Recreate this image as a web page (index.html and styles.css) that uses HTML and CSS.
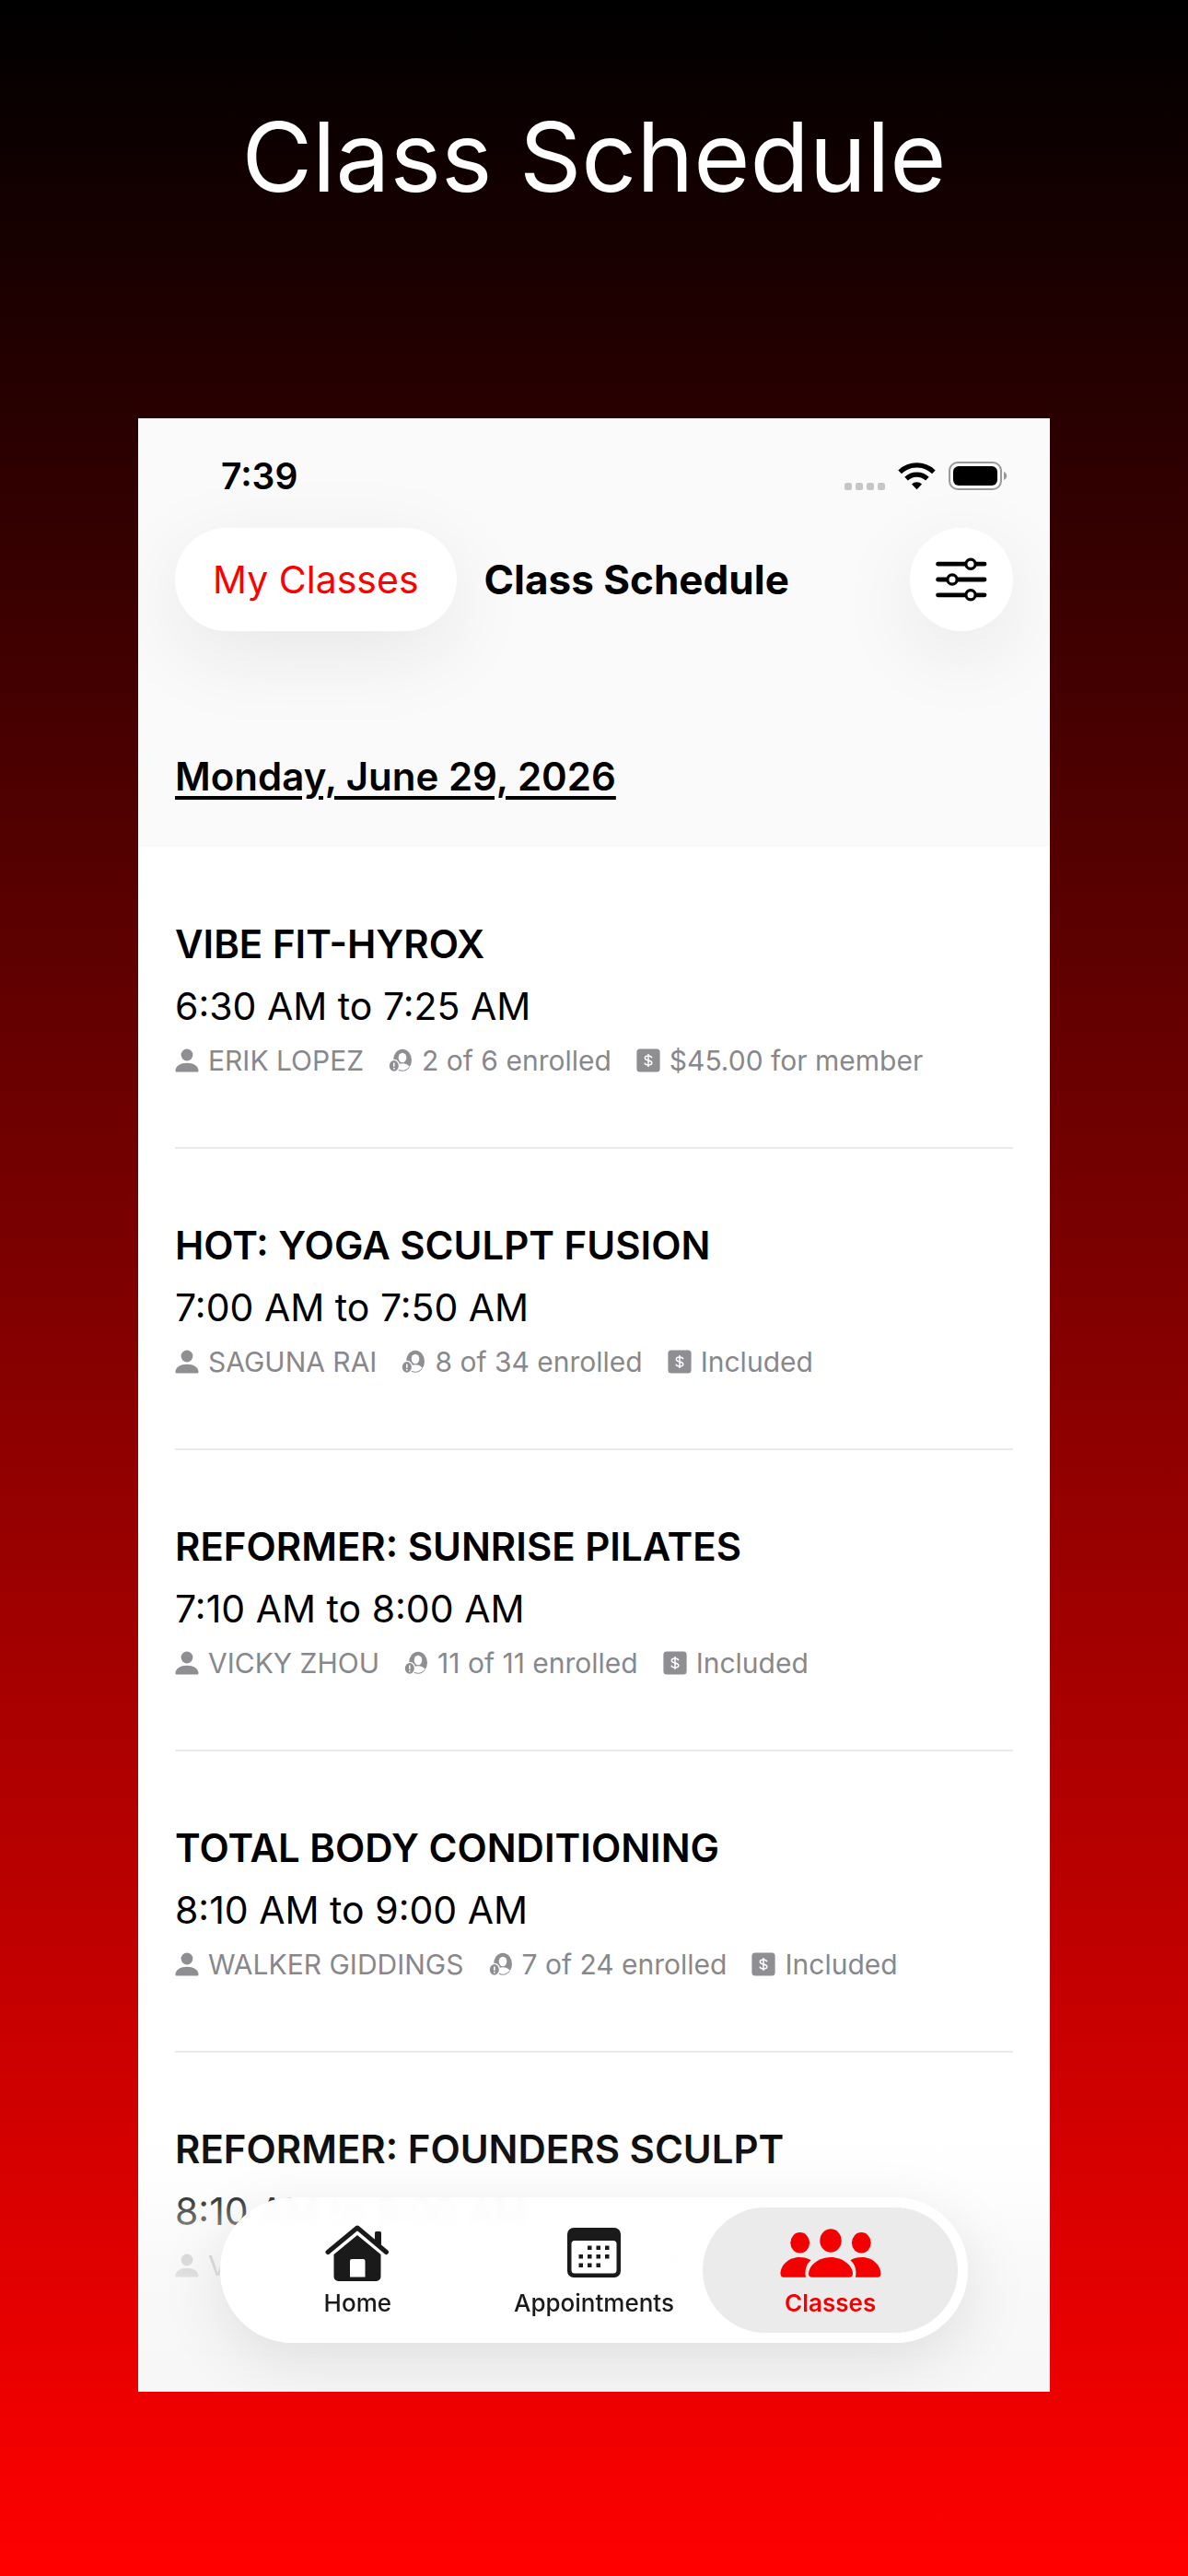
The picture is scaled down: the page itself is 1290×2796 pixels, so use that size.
FILE: index.html
```html
<!DOCTYPE html>
<html lang="en">
<head>
<meta charset="utf-8">
<meta name="viewport" content="width=device-width, initial-scale=1">
<title>Class Schedule</title>
<link rel="stylesheet" href="styles.css">
</head>
<body>
<svg class="sprite" aria-hidden="true">
  <symbol id="i-person" viewBox="0 0 26 26">
    <circle cx="13" cy="7" r="6.4"/>
    <path d="M.5 24c0-5 5.600-8.300 12.500-8.300S25.500 19 25.500 24c0 1-.6 1.600-1.600 1.600H2.100C1.100 25.600.5 25 .5 24z"/>
  </symbol>
  <symbol id="i-enrolled" viewBox="0 0 26 26">
    <ellipse cx="15" cy="12.800" rx="10" ry="12"/>
    <ellipse cx="15" cy="10" rx="4.300" ry="5.300" fill="#fff"/>
    <path d="M8 20c1.500-2.600 4-3.800 7-3.800s5.800 1.200 7.600 3.400c-1.800 2.600-4.400 4.200-7.600 4.200-2.800 0-5.200-1.500-7-3.800z" fill="#fff"/>
    <ellipse cx="5.800" cy="18.900" rx="6.500" ry="7.100" fill="#fff"/>
    <ellipse cx="5.800" cy="18.900" rx="5" ry="5.800"/>
    <path d="M5.800 15.500v4.200M5.800 21v1.600" fill="none" stroke="#fff" stroke-width="1.600"/>
  </symbol>
  <symbol id="i-price" viewBox="0 0 26 26">
    <rect x=".4" y=".4" width="25.200" height="25.200" rx="3.500"/>
    <path d="M16.800 10.200c-.4-1.400-1.800-2.200-3.800-2.200-2.200 0-3.700 1-3.700 2.500 0 3.500 7.500 1.500 7.500 5.100 0 1.500-1.600 2.500-3.800 2.500s-3.700-.9-4-2.400M13 6v14" fill="none" stroke="#fff" stroke-width="1.500"/>
  </symbol>
</svg>

<h1 class="headline">Class Schedule</h1>

<div class="phone">
  <header class="top">
    <div class="status">
      <span class="clock">7:39</span>
      <span class="status-icons">
        <svg class="i-signal" viewBox="0 0 44 8"><g fill="#c6c6c6"><rect width="8" height="8" rx="2.500"/><rect x="12" width="8" height="8" rx="2.500"/><rect x="24" width="8" height="8" rx="2.500"/><rect x="36" width="8" height="8" rx="2.500"/></g></svg>
        <svg class="i-wifi" viewBox="0 0 42 31"><g fill="none" stroke="#000" stroke-width="5.400"><path d="M2.200 11.300a27 27 0 0 1 37.600 0"/><path d="M9.300 18.700a17 17 0 0 1 23.400 0"/></g><path d="M21 30.500l-5.700-5.700a8.300 8.300 0 0 1 11.400 0z"/></svg>
        <svg class="i-battery" viewBox="0 0 64 31"><rect x="1" y="1" width="56" height="29" rx="9" fill="none" stroke="#9a9a9a" stroke-width="2"/><rect x="5" y="5" width="48" height="21" rx="6"/><path d="M60 11c2 .6 3.200 2.400 3.200 4.500S62 19.400 60 20z" fill="#9a9a9a"/></svg>
      </span>
    </div>
    <nav class="bar">
      <button class="pill" type="button">My Classes</button>
      <h2 class="bar-title">Class Schedule</h2>
      <button class="round" type="button" aria-label="Filters">
        <svg class="i-filter" viewBox="0 0 56 48"><path d="M2.600 7.200h50.400M2.600 24h50.400M2.600 40.800h50.400" stroke="#000" stroke-width="4.800" stroke-linecap="round"/><g fill="#fff" stroke="#000" stroke-width="3.200"><circle cx="38" cy="7.200" r="5.100"/><circle cx="18" cy="24" r="5.100"/><circle cx="38" cy="40.800" r="5.100"/></g></svg>
      </button>
    </nav>
    <h3 class="date">Monday, June 29, 2026</h3>
  </header>

  <main>
    <ul class="classes">
      <li class="class">
        <h4 class="name">VIBE FIT-HYROX</h4>
        <p class="time">6:30 AM to 7:25 AM</p>
        <p class="meta"><span class="tag"><svg><use href="#i-person"/></svg>ERIK LOPEZ</span><span class="tag"><svg><use href="#i-enrolled"/></svg>2 of 6 enrolled</span><span class="tag"><svg><use href="#i-price"/></svg>$45.00 for member</span></p>
      </li>
      <li class="class">
        <h4 class="name">HOT: YOGA SCULPT FUSION</h4>
        <p class="time">7:00 AM to 7:50 AM</p>
        <p class="meta"><span class="tag"><svg><use href="#i-person"/></svg>SAGUNA RAI</span><span class="tag"><svg><use href="#i-enrolled"/></svg>8 of 34 enrolled</span><span class="tag"><svg><use href="#i-price"/></svg>Included</span></p>
      </li>
      <li class="class">
        <h4 class="name">REFORMER: SUNRISE PILATES</h4>
        <p class="time">7:10 AM to 8:00 AM</p>
        <p class="meta"><span class="tag"><svg><use href="#i-person"/></svg>VICKY ZHOU</span><span class="tag"><svg><use href="#i-enrolled"/></svg>11 of 11 enrolled</span><span class="tag"><svg><use href="#i-price"/></svg>Included</span></p>
      </li>
      <li class="class">
        <h4 class="name">TOTAL BODY CONDITIONING</h4>
        <p class="time">8:10 AM to 9:00 AM</p>
        <p class="meta"><span class="tag"><svg><use href="#i-person"/></svg>WALKER GIDDINGS</span><span class="tag"><svg><use href="#i-enrolled"/></svg>7 of 24 enrolled</span><span class="tag"><svg><use href="#i-price"/></svg>Included</span></p>
      </li>
      <li class="class">
        <h4 class="name">REFORMER: FOUNDERS SCULPT</h4>
        <p class="time">8:10 AM to 9:00 AM</p>
        <p class="meta"><span class="tag"><svg><use href="#i-person"/></svg>VICKY ZHOU</span><span class="tag"><svg><use href="#i-enrolled"/></svg>11 of 11 enrolled</span><span class="tag"><svg><use href="#i-price"/></svg>Included</span></p>
      </li>
    </ul>
  </main>

  <nav class="tabs" aria-label="Sections">
    <a class="tab" href="#home">
      <svg class="tab-icon" viewBox="0 0 70 62"><path d="M3 30.500L35 4l31.500 26.500" fill="none" stroke="currentColor" stroke-width="5" stroke-linecap="round" stroke-linejoin="round"/><path d="M54 9.500a1.500 1.500 0 0 1 1.500-1.500h4a1.500 1.500 0 0 1 1.500 1.500V25l-7-6z"/><path fill-rule="evenodd" d="M35 12L60.500 33v24a5 5 0 0 1-5 5h-41a5 5 0 0 1-5-5V33zM29 38a2 2 0 0 0-2 2v17.500h16.500V40a2 2 0 0 0-2-2z"/></svg>
      <span>Home</span>
    </a>
    <a class="tab" href="#appointments">
      <svg class="tab-icon" viewBox="0 0 70 62"><path fill-rule="evenodd" d="M13 4h44a7 7 0 0 1 7 7v40a7 7 0 0 1-7 7H13a7 7 0 0 1-7-7V11a7 7 0 0 1 7-7zm1 14a3.500 3.500 0 0 0-3.500 3.500V50a3.500 3.500 0 0 0 3.500 3.500h42a3.500 3.500 0 0 0 3.500-3.500V21.500A3.500 3.500 0 0 0 56 18z"/><rect x="28" y="23.500" width="4.500" height="4.500"/><rect x="37.500" y="23.500" width="4.500" height="4.500"/><rect x="47" y="23.500" width="4.500" height="4.500"/><rect x="18.500" y="33" width="4.500" height="4.500"/><rect x="28" y="33" width="4.500" height="4.500"/><rect x="37.500" y="33" width="4.500" height="4.500"/><rect x="47" y="33" width="4.500" height="4.500"/><rect x="18.500" y="42.500" width="4.500" height="4.500"/><rect x="28" y="42.500" width="4.500" height="4.500"/><rect x="37.500" y="42.500" width="4.500" height="4.500"/></svg>
      <span>Appointments</span>
    </a>
    <a class="tab tab-active" href="#classes" aria-current="page">
      <svg class="tab-icon tab-icon-wide" viewBox="0 0 110 62"><ellipse cx="55" cy="18" rx="11.700" ry="12.700"/><ellipse cx="21.700" cy="20.300" rx="10.400" ry="11.200"/><ellipse cx="88.300" cy="20.300" rx="10.400" ry="11.200"/><path d="M31 54c0-9 11-18 24-18s24 9 24 18c0 2.300-1.300 3.700-3.500 3.700h-41C32.300 57.700 31 56.300 31 54z"/><path id="side" d="M.5 54c0-9 8.700-18 20.500-18 4.800 0 9 1.100 12.600 3.200C28.500 43.500 26.500 50 28 57.700H4C1.800 57.700.5 56.300.5 54z"/><use href="#side" transform="matrix(-1 0 0 1 110 0)"/></svg>
      <span>Classes</span>
    </a>
  </nav>
</div>
</body>
</html>
```
FILE: styles.css
```css
* { box-sizing: border-box; }

html { background: #f00; }

body {
  margin: 0;
  min-height: 100vh;
  padding: 0 150px 200px;
  background: linear-gradient(#000, #f00);
  color: #000;
  font-family: Inter, "Liberation Sans", sans-serif;
}

h1, h2, h3, h4, p, ul { margin: 0; padding: 0; }
svg { display: block; flex: none; }
.sprite { position: absolute; width: 0; height: 0; }

.headline {
  padding: 105px 0 219px;
  color: #fff;
  font-size: 105px;
  font-weight: 400;
  line-height: 130px;
  text-align: center;
}

.phone {
  position: relative;
  overflow: hidden;
  padding-bottom: 41px;
  background: #fff;
}

.top {
  padding: 35px 40px 48px;
  background: #fafafa;
}

.status {
  display: flex;
  align-items: center;
  justify-content: space-between;
  height: 54px;
  padding: 0 6px 0 50px;
}
.clock { font-size: 39px; font-weight: 600; }
.status-icons { display: flex; align-items: flex-end; gap: 14px; }
.i-signal { width: 44px; height: 8px; }
.i-wifi { width: 41px; height: 31px; }
.i-battery { width: 64px; height: 31px; }

.bar {
  display: flex;
  align-items: center;
  margin-top: 30px;
}
.pill, .round {
  height: 112px;
  padding: 0;
  border: 0;
  border-radius: 56px;
  background: #fff;
  box-shadow: 0 24px 90px rgba(0, 0, 0, .08);
  font-family: inherit;
}
.pill {
  padding: 0 41px;
  color: #f00;
  font-size: 41px;
  line-height: 56px;
}
.round {
  display: grid;
  place-items: center;
  width: 112px;
  margin-left: auto;
}
.i-filter { width: 56px; height: 48px; }
.bar-title {
  margin-left: 30px;
  font-size: 44px;
  font-weight: 700;
  line-height: 56px;
}

.date {
  margin-top: 130px;
  font-size: 42px;
  font-weight: 600;
  line-height: 56px;
  text-decoration: underline;
  text-decoration-thickness: 4px;
  text-underline-offset: 6px;
}

.classes {
  padding: 1px 40px 0;
  list-style: none;
}
.class {
  display: flex;
  flex-direction: column;
  gap: 11px;
  padding: 77px 0 74px;
  border-bottom: 2px solid #ebebeb;
}
.name { font-size: 42px; font-weight: 600; line-height: 56px; }
.time { font-size: 41px; line-height: 56px; }
.meta {
  display: flex;
  gap: 27px;
  color: #88888c;
  font-size: 30px;
  line-height: 40px;
}
.tag { display: flex; align-items: center; gap: 10px; }
.tag svg { width: 26px; height: 26px; fill: #8e8e93; }

/* Content fades out behind the floating tab bar. */
.phone::after {
  content: "";
  position: absolute;
  inset: auto 0 0;
  height: 306px;
  background: linear-gradient(
    rgba(247, 247, 247, 0),
    rgba(247, 247, 247, .1) 20%,
    rgba(247, 247, 247, .25) 32%,
    rgba(247, 247, 247, .5) 41%,
    rgba(247, 247, 247, .72) 52%,
    rgba(247, 247, 247, .85) 65%,
    #f7f7f7
  );
}

.tabs {
  position: absolute;
  z-index: 1;
  right: 89px;
  bottom: 53px;
  left: 89px;
  display: flex;
  padding: 11px;
  border-radius: 79px;
  background: rgba(255, 255, 255, .97);
  box-shadow: 0 20px 70px rgba(0, 0, 0, .1);
  backdrop-filter: blur(4px);
}
.tab {
  display: flex;
  flex: 1;
  flex-direction: column;
  align-items: center;
  gap: 8px;
  height: 136px;
  padding-top: 18px;
  border-radius: 68px;
  color: #1a1a1a;
  fill: currentColor;
  font-size: 26px;
  font-weight: 500;
  line-height: 32px;
  text-decoration: none;
}
.tab + .tab { margin-left: -20px; }
.tab-active { background: #ebebeb; color: #f50000; font-weight: 600; }
.tab-icon { width: 70px; height: 62px; }
.tab-icon-wide { width: 110px; }
```
